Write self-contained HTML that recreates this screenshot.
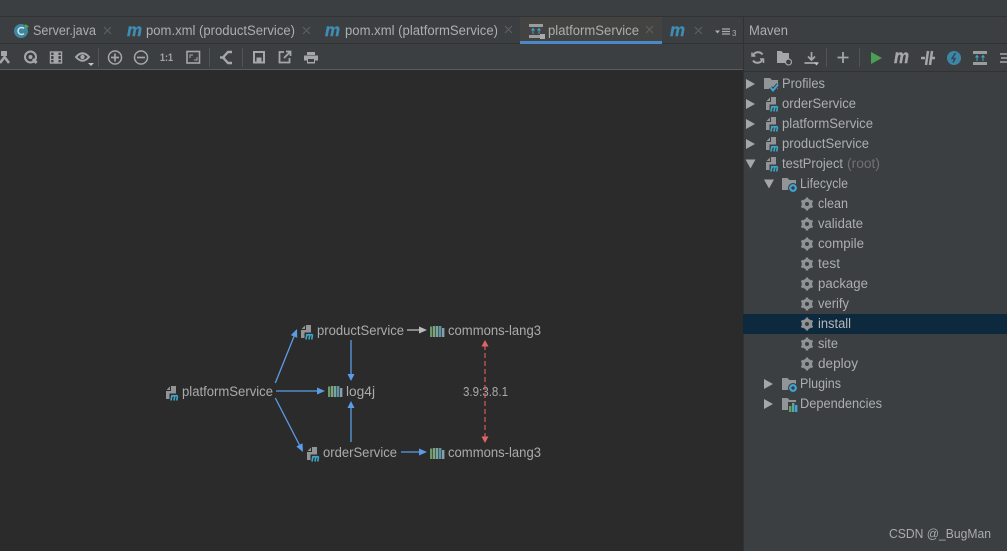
<!DOCTYPE html>
<html><head><meta charset="utf-8"><style>
html,body{margin:0;padding:0;background:#3c3f41;width:1007px;height:551px;overflow:hidden}
svg{display:block;filter:blur(.35px)}
text{font-family:"Liberation Sans",sans-serif;font-size:13.5px;fill:#acaeb0}
.g text{fill:#a9abac}
.mm{font-size:17.5px;font-weight:bold;font-style:italic;fill:#3f8db3;stroke:#3f8db3;stroke-width:.4px}
</style></head><body>
<svg width="1007" height="551" viewBox="0 0 1007 551" xmlns="http://www.w3.org/2000/svg">
<defs>
<g id="mod"><path d="M7 1h5v13H2V6h5z" fill="#929496"/><path d="M2.500 5L6 1.500V5z" fill="#929496"/><rect x="5.500" y="8.500" width="10" height="8" fill="#3c3f41"/><path d="M7 15.500l1-5.500M8 11.500q2.200-2 2.700 0l-.7 4M10.700 11.500q2.200-2 2.700 0l-.7 4" fill="none" stroke="#3ea6c9" stroke-width="1.600"/></g>
<g id="modd"><path d="M7 1h5v13H2V6h5z" fill="#929496"/><path d="M2.500 5L6 1.500V5z" fill="#929496"/><rect x="5.500" y="8.500" width="10" height="8" fill="#2b2b2b"/><path d="M7 15.500l1-5.500M8 11.500q2.200-2 2.700 0l-.7 4M10.700 11.500q2.200-2 2.700 0l-.7 4" fill="none" stroke="#3ea6c9" stroke-width="1.600"/></g>
<g id="lib"><rect x="0" y="1.500" width="2.400" height="10.500" fill="#6a9a6a"/><rect x="3" y="1" width="2.400" height="11" fill="#7fa37b"/><rect x="6" y="1" width="2.400" height="11" fill="#79a5a0"/><rect x="9" y="1" width="2.400" height="11" fill="#5c93a8"/><rect x="12" y="3" width="2.400" height="9" fill="#8a9ea8"/></g>
<g id="gear"><circle cx="7" cy="7" r="3.600" fill="none" stroke="#909395" stroke-width="3.400"/><path d="M7 .5v13M1.400 3.800l11.200 6.400M1.400 10.200l11.200-6.400" stroke="#909395" stroke-width="2.400"/><circle cx="7" cy="7" r="2" fill="#3c3f41"/></g>
<g id="fold"><path d="M0 1h5.500l2 2H14v10H0z" fill="#929598"/></g>
<g id="sep"><rect width="1" height="19" fill="#515354"/></g>
</defs>

<!-- base areas -->
<rect width="1007" height="551" fill="#3c3f41"/>
<rect x="0" y="16" width="1007" height="1" fill="#323232"/>
<rect x="0" y="43" width="1007" height="1" fill="#323232"/>
<rect x="0" y="70" width="743" height="481" fill="#2b2b2b"/>
<rect x="0" y="69" width="743" height="1" fill="#5a5c5e"/>
<rect x="743" y="16" width="1" height="535" fill="#323232"/>
<rect x="744" y="71" width="263" height="1" fill="#323232"/>
<rect x="520" y="17" width="142" height="24" fill="#434342"/>
<rect x="520" y="41" width="142" height="3" fill="#4a88c7"/>
<rect x="743" y="314" width="264" height="20" fill="#0d293e"/>

<!-- tabs -->
<circle cx="21" cy="31" r="7" fill="#3e86a0"/><path d="M24 28.500a3.500 3.500 0 1 0 0 5" fill="none" stroke="#d4e4ea" stroke-width="1.500"/><path d="M25 24l4 2.500-4 2.500z" fill="#4ea34e"/>
<text x="33" y="35" textLength="63" lengthAdjust="spacingAndGlyphs">Server.java</text>
<path d="M104 27l7 7M111 27l-7 7" stroke="#5e6163" stroke-width="1"/>
<text x="127" y="36" class="mm" textLength="15" lengthAdjust="spacingAndGlyphs">m</text>
<text x="146" y="35" textLength="149" lengthAdjust="spacingAndGlyphs">pom.xml (productService)</text>
<path d="M303 27l7 7M310 27l-7 7" stroke="#5e6163" stroke-width="1"/>
<text x="325" y="36" class="mm" textLength="15" lengthAdjust="spacingAndGlyphs">m</text>
<text x="345" y="35" textLength="153" lengthAdjust="spacingAndGlyphs">pom.xml (platformService)</text>
<path d="M505 26l7 7M512 26l-7 7" stroke="#5e6163" stroke-width="1"/>
<rect x="529" y="24" width="14" height="3" fill="#9a9c9e"/><rect x="529" y="35" width="14" height="3" fill="#9a9c9e"/>
<path d="M533 34v-5M531.500 30.500l1.500-2 1.500 2M539 34v-5M537.500 30.500l1.500-2 1.500 2" stroke="#3ea6c9" fill="none"/><rect x="540" y="34" width="5" height="5" fill="#a8aaac"/>
<text x="548" y="35" textLength="91" lengthAdjust="spacingAndGlyphs">platformService</text>
<path d="M646 26l7 7M653 26l-7 7" stroke="#5e6163" stroke-width="1"/>
<text x="670" y="36" class="mm" textLength="15" lengthAdjust="spacingAndGlyphs">m</text>
<path d="M695 27l7 7M702 27l-7 7" stroke="#5e6163" stroke-width="1"/>
<path d="M715 30.500h5l-2.500 3z" fill="#a9abad"/>
<path d="M722 29h8M722 31.500h8M722 34h8" stroke="#a9abad" stroke-width="1.200"/>
<text x="732" y="36" style="font-size:8px">3</text>
<text x="749" y="35" textLength="39" lengthAdjust="spacingAndGlyphs">Maven</text>

<!-- left toolbar -->
<g fill="none" stroke="#a4a6a8" stroke-width="1.800">
<path d="M0 63l4.500-6 4.500 6" stroke-width="2.600"/><rect x="1" y="51" width="6" height="5" fill="#a4a6a8" stroke="none"/>
<circle cx="30.500" cy="57" r="5.500" stroke-width="2"/><circle cx="30.500" cy="57" r="2" fill="#a4a6a8" stroke="none"/>
<path d="M33 59l3.500 4" stroke-width="3"/>
<rect x="50.500" y="52" width="11" height="11" stroke-width="1.400"/><path d="M50 55.500h12M50 59.500h12" stroke-width="1"/><rect x="53.500" y="52" width="5" height="11" fill="#a4a6a8" stroke="none"/>
<path d="M76 57q6.500-7.500 13 0q-6.500 7.500-13 0z" stroke-width="2"/><circle cx="82.500" cy="57" r="2.200" fill="#a4a6a8" stroke="none"/>
<circle cx="115" cy="57.500" r="6.500" stroke-width="1.500"/><path d="M111 57.500h8M115 53.500v8" stroke-width="1.700"/>
<circle cx="141" cy="57.500" r="6.500" stroke-width="1.500"/><path d="M137 57.500h8" stroke-width="1.700"/>
<rect x="187" y="51.500" width="12.500" height="11.500" stroke-width="1.600"/><path d="M190 58v-3h3M197 57v3h-3" stroke-width="1"/>
<path d="M232 52h-4l-5 5.500 5 5.500h4M220 57.500h5" stroke-width="2.400"/>
<rect x="254" y="52" width="10" height="10.500" stroke-width="2"/><rect x="256.500" y="57.500" width="5" height="5.500" fill="#a4a6a8" stroke="none"/>
<path d="M284 52h-4.500v10.500h10V58M284 58l6-6M286 51.500h4.500v4.500" stroke-width="1.800"/>
</g>
<path d="M88 63h6l-3 3z" fill="#c0c2c4"/>
<text x="160" y="61" style="font-size:11px;font-weight:bold;fill:#a4a6a8" textLength="13" lengthAdjust="spacingAndGlyphs">1:1</text>
<path d="M307 52h8v3h-8zM304 55.500h14v5h-3v3h-8v-3h-3z" fill="#a4a6a8"/><rect x="308" y="59" width="6" height="3" fill="#3c3f41"/>
<use href="#sep" x="98" y="48"/><use href="#sep" x="209" y="48"/><use href="#sep" x="242" y="48"/>

<!-- maven toolbar -->
<g fill="none" stroke="#a4a6a8" stroke-width="2">
<path d="M762.500 54.500a5.500 5.500 0 0 0-9.500 1M753 60.500a5.500 5.500 0 0 0 9.500-1"/>
<path d="M752 52.500v3.500h3.500M763.500 63v-4h-3.500" stroke-width="1.500"/>
<path d="M843 52v11M837.500 57.500h11" stroke-width="1.800"/>
<path d="M811.500 52v7M808 56.500l3.500 3.500 3.500-3.500M804.500 63h13" stroke-width="1.700"/>
</g>
<path d="M777 51h4.500l1.500 2h6v10h-12z" fill="#a4a6a8"/><circle cx="788.500" cy="62" r="3" fill="#3c3f41" stroke="#a4a6a8" stroke-width="1.200"/>
<path d="M814 62.500h5l-2.500 3z" fill="#c0c2c4"/>
<use href="#sep" x="826" y="48"/><use href="#sep" x="859" y="48"/>
<path d="M871 52l11 6-11 6z" fill="#4b9f54"/>
<text x="894" y="63" class="mm" style="font-size:19px;fill:#a4a6a8;stroke:#a4a6a8" textLength="15" lengthAdjust="spacingAndGlyphs">m</text>
<path d="M921 58h4M931 58h4M926 65l2-14M930 65l2-14" stroke="#a4a6a8" stroke-width="2.500"/>
<circle cx="954" cy="58" r="7" fill="#3f86a6"/><path d="M955.500 53l-3.500 5.500h3l-2 4" fill="none" stroke="#2b4a5a" stroke-width="1.500"/>
<rect x="973" y="51" width="14" height="3" fill="#9a9c9e"/><rect x="973" y="62" width="14" height="3" fill="#9a9c9e"/>
<path d="M977 61v-5M975.500 57.500l1.500-2 1.500 2M983 61v-5M981.500 57.500l1.500-2 1.500 2" stroke="#3ea6c9" fill="none"/>
<path d="M1000 54h7M1000 62h7M1001 58h6" stroke="#a4a6a8" stroke-width="1.600" fill="none"/>

<!-- tree arrows -->
<g fill="#a4a6a8">
<path d="M746 79l9 5-9 5zM746 99l9 5-9 5zM746 119l9 5-9 5zM746 139l9 5-9 5z"/>
<path d="M745.500 159.500h10l-5 9zM764 179.500h10l-5 9z"/>
<path d="M764 379l9 5-9 5zM764 399l9 5-9 5z"/>
</g>

<!-- tree icons -->
<path d="M764 78h6l2 2h6v9h-14z" fill="#929598"/>
<path d="M770.500 87.500l2.500 3 5-6" fill="none" stroke="#3c3f41" stroke-width="4"/>
<path d="M770.500 87.500l2.500 3 5-6" fill="none" stroke="#3ea6d6" stroke-width="2"/>
<use href="#mod" x="764" y="96"/><use href="#mod" x="764" y="116"/><use href="#mod" x="764" y="136"/><use href="#mod" x="764" y="156"/>
<use href="#fold" x="782" y="177"/><circle cx="793" cy="188" r="5" fill="#3c3f41"/><circle cx="793" cy="188" r="2.800" fill="none" stroke="#3ea6d6" stroke-width="2.200"/>
<use href="#fold" x="782" y="377"/><circle cx="793" cy="388" r="5" fill="#3c3f41"/><circle cx="793" cy="388" r="2.800" fill="none" stroke="#3ea6d6" stroke-width="2.200"/>
<use href="#fold" x="782" y="397"/><rect x="788" y="402" width="10" height="10" fill="#3c3f41"/><rect x="789" y="406" width="2.400" height="6" fill="#5fa35f"/><rect x="792" y="403" width="2.400" height="9" fill="#5fa3a3"/><rect x="795" y="405" width="2.400" height="7" fill="#3ea6d6"/>
<use href="#gear" x="800" y="197"/><use href="#gear" x="800" y="217"/><use href="#gear" x="800" y="237"/><use href="#gear" x="800" y="257"/><use href="#gear" x="800" y="277"/><use href="#gear" x="800" y="297"/><use href="#gear" x="800" y="317"/><use href="#gear" x="800" y="337"/><use href="#gear" x="800" y="357"/>

<!-- tree text -->
<text x="782" y="88" textLength="43" lengthAdjust="spacingAndGlyphs">Profiles</text>
<text x="782" y="108" textLength="74" lengthAdjust="spacingAndGlyphs">orderService</text>
<text x="782" y="128" textLength="91" lengthAdjust="spacingAndGlyphs">platformService</text>
<text x="782" y="148" textLength="87" lengthAdjust="spacingAndGlyphs">productService</text>
<text x="782" y="168" textLength="61" lengthAdjust="spacingAndGlyphs">testProject</text>
<text x="847" y="168" textLength="33" lengthAdjust="spacingAndGlyphs" style="fill:#6f7173">(root)</text>
<text x="800" y="188" textLength="48" lengthAdjust="spacingAndGlyphs">Lifecycle</text>
<text x="818" y="208" textLength="30" lengthAdjust="spacingAndGlyphs">clean</text>
<text x="818" y="228" textLength="45" lengthAdjust="spacingAndGlyphs">validate</text>
<text x="818" y="248" textLength="46" lengthAdjust="spacingAndGlyphs">compile</text>
<text x="818" y="268" textLength="22" lengthAdjust="spacingAndGlyphs">test</text>
<text x="818" y="288" textLength="50" lengthAdjust="spacingAndGlyphs">package</text>
<text x="818" y="308" textLength="31" lengthAdjust="spacingAndGlyphs">verify</text>
<text x="818" y="328" textLength="33" lengthAdjust="spacingAndGlyphs" style="fill:#b5b7b9">install</text>
<text x="818" y="348" textLength="20" lengthAdjust="spacingAndGlyphs">site</text>
<text x="818" y="368" textLength="40" lengthAdjust="spacingAndGlyphs">deploy</text>
<text x="800" y="388" textLength="41" lengthAdjust="spacingAndGlyphs">Plugins</text>
<text x="800" y="408" textLength="82" lengthAdjust="spacingAndGlyphs">Dependencies</text>

<!-- graph -->
<g class="g">
<text x="182" y="396" textLength="91" lengthAdjust="spacingAndGlyphs">platformService</text>
<text x="317" y="335" textLength="87" lengthAdjust="spacingAndGlyphs">productService</text>
<text x="346" y="396" textLength="29" lengthAdjust="spacingAndGlyphs">log4j</text>
<text x="323" y="457" textLength="74" lengthAdjust="spacingAndGlyphs">orderService</text>
<text x="448" y="335" textLength="93" lengthAdjust="spacingAndGlyphs">commons-lang3</text>
<text x="448" y="457" textLength="93" lengthAdjust="spacingAndGlyphs">commons-lang3</text>
<text x="463" y="396" textLength="45" lengthAdjust="spacingAndGlyphs" style="font-size:12.500px">3.9:3.8.1</text>
</g>
<use href="#modd" x="164" y="385"/><use href="#modd" x="299" y="324"/><use href="#modd" x="305" y="446"/>
<use href="#lib" x="328" y="385"/><use href="#lib" x="430" y="325"/><use href="#lib" x="430" y="447"/>

<g stroke="#5c9ce6" stroke-width="1.300" fill="none">
<path d="M275.300 383L294 336.500"/><path d="M276 391h44"/><path d="M275.300 398L299.500 445"/>
<path d="M351 340v36"/><path d="M351 442v-36"/><path d="M401 452h21"/>
</g>
<g fill="#5c9ce6">
<path d="M297 329l.2 8.700-6.400-2.600z"/><path d="M325 391l-8-3.500v7z"/><path d="M303 452l-6.700-5.500 6.200-3.200z"/>
<path d="M351 381l-3.500-7h7z"/><path d="M351 401l-3.500 7h7z"/><path d="M427 452l-8-3.500v7z"/>
</g>
<path d="M407 330h15" stroke="#b9bbbd" stroke-width="1.300"/><path d="M427 330l-8-3.500v7z" fill="#b9bbbd"/>
<path d="M485 345v92" stroke="#d65b5b" stroke-width="1.200" stroke-dasharray="5 3"/>
<path d="M485 340l-3.500 6.500h7zM485 443l-3.500-6.500h7z" fill="#e06666"/>

<!-- watermark -->
<text x="889" y="538" textLength="102" lengthAdjust="spacingAndGlyphs" style="font-size:12.500px;fill:#a9abad">CSDN @_BugMan</text>
</svg>
</body></html>
